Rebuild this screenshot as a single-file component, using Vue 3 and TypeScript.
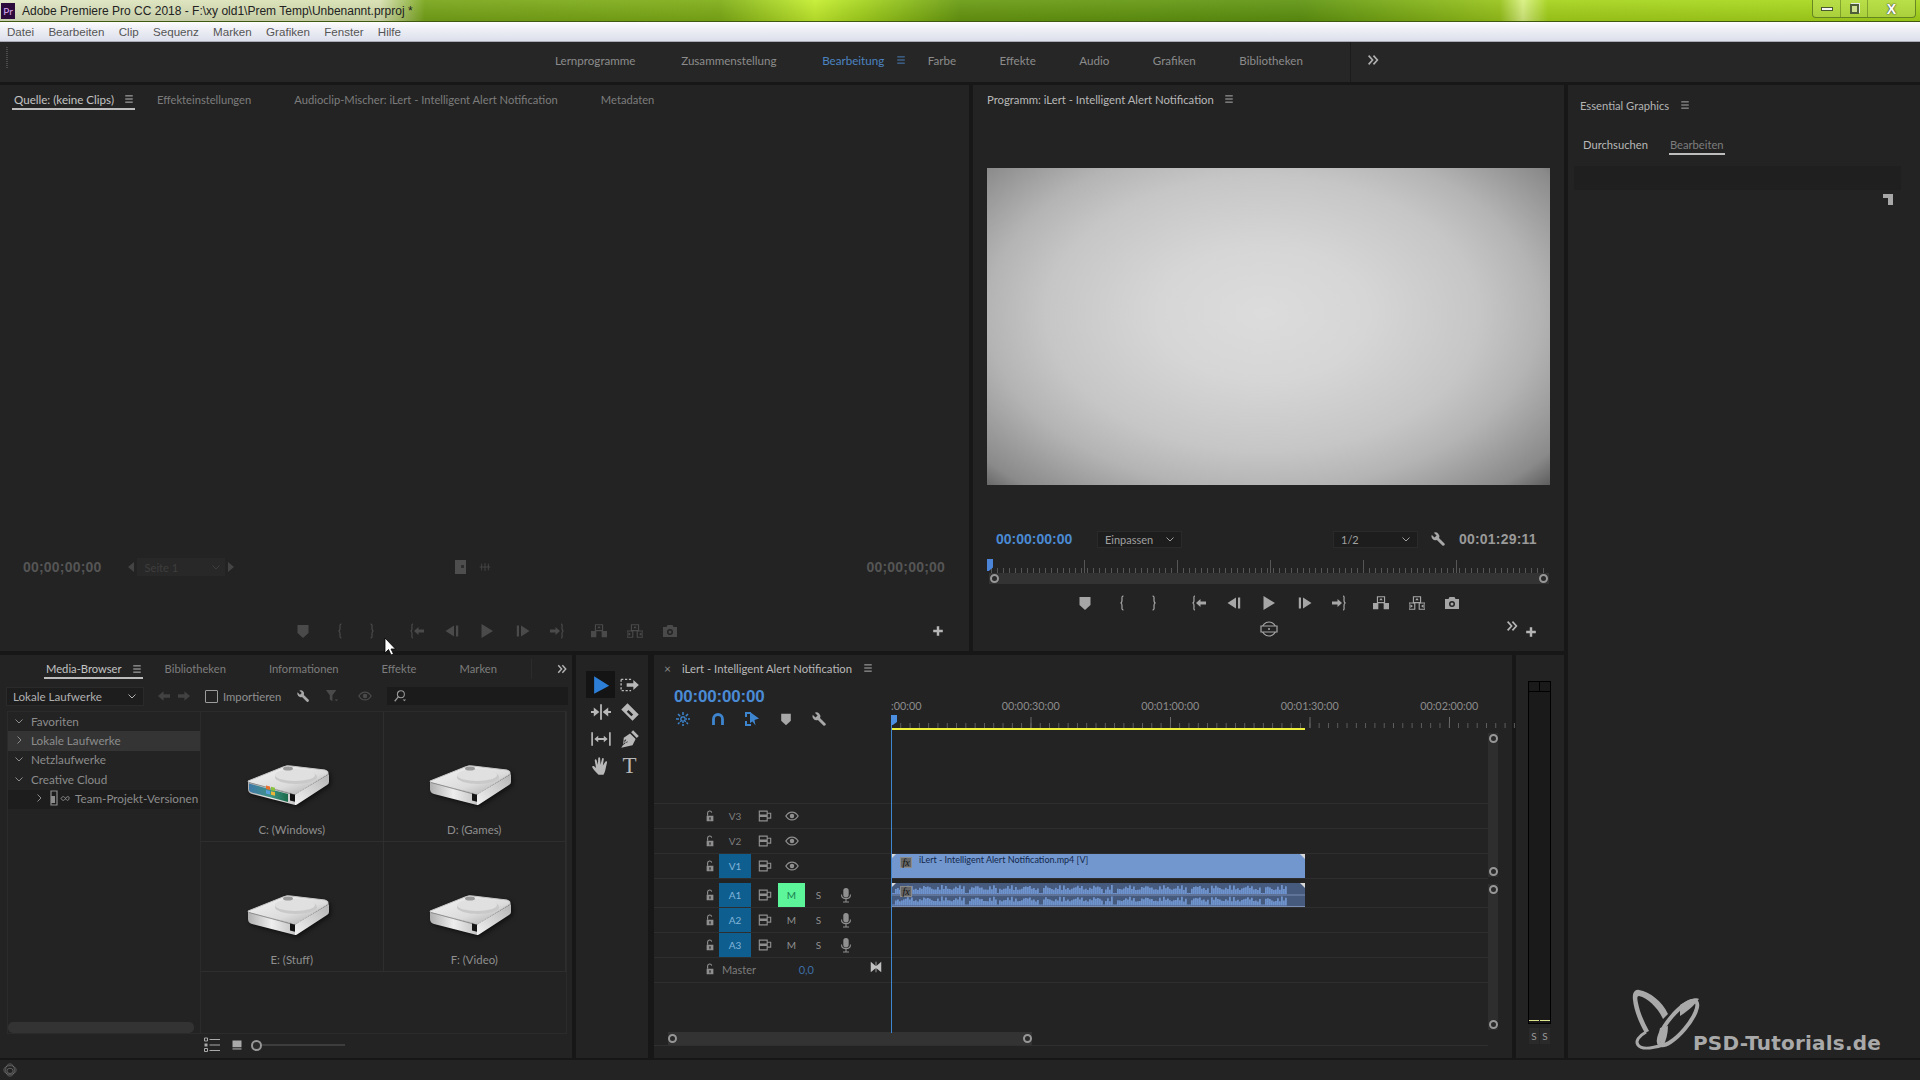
<template>
  <div class="app">
    <!-- shared icon sprite -->
    <svg class="sprite" width="0" height="0" aria-hidden="true">
      <defs>
        <linearGradient id="hdd-top" x1="0" y1="0" x2="1" y2="1">
          <stop offset="0" stop-color="#f4f4f4" />
          <stop offset="0.6" stop-color="#dcdcdc" />
          <stop offset="1" stop-color="#a8a8a8" />
        </linearGradient>
        <linearGradient id="hdd-front" x1="0" y1="0" x2="1" y2="0">
          <stop offset="0" stop-color="#b0b0b0" />
          <stop offset="0.5" stop-color="#eeeeee" />
          <stop offset="1" stop-color="#c4c4c4" />
        </linearGradient>
        <linearGradient id="hdd-side" x1="0" y1="1" x2="1" y2="0">
          <stop offset="0" stop-color="#f2f2f2" />
          <stop offset="1" stop-color="#b4b4b4" />
        </linearGradient>
        <linearGradient id="hdd-win" x1="0" y1="0" x2="1" y2="0">
          <stop offset="0" stop-color="#3f78a8" />
          <stop offset="0.55" stop-color="#3f9488" />
          <stop offset="1" stop-color="#1b6a48" />
        </linearGradient>
      </defs>
      <symbol id="i-menu" viewBox="0 0 16 16"><path d="M2 3h12M2 8h12M2 13h12" stroke="currentColor" stroke-width="1.5" fill="none" /></symbol>
      <symbol id="i-marker" viewBox="0 0 16 16"><path d="M2.500 2h11v8L8 15 2.500 10z" fill="currentColor" /></symbol>
      <symbol id="i-in" viewBox="0 0 16 16"><path d="M9.500 1C7.500 1 8 3 8 5s-.6 3-1.600 3c1 0 1.600 1 1.600 3s-.5 4 1.500 4" stroke="currentColor" stroke-width="1.200" fill="none" /></symbol>
      <symbol id="i-out" viewBox="0 0 16 16"><path d="M6.500 1C8.500 1 8 3 8 5s.6 3 1.600 3C8.600 8 8 9 8 11s.5 4-1.500 4" stroke="currentColor" stroke-width="1.200" fill="none" /></symbol>
      <symbol id="i-goin" viewBox="0 0 16 16"><path d="M4 1C2.400 1 3 3 3 5s-.6 3-1.600 3C2.400 8 3 9 3 11s-.6 4 1 4" stroke="currentColor" stroke-width="1.200" fill="none" /><path d="M5 8l4.500-4v2.500H15v3H9.500V12z" fill="currentColor" /></symbol>
      <symbol id="i-goout" viewBox="0 0 16 16"><path d="M12 1c1.600 0 1 2 1 4s.6 3 1.600 3C13.600 8 13 9 13 11s.6 4-1 4" stroke="currentColor" stroke-width="1.200" fill="none" /><path d="M11 8L6.500 4v2.500H1v3h5.500V12z" fill="currentColor" /></symbol>
      <symbol id="i-stepback" viewBox="0 0 16 16"><path d="M1.500 8L10 2.500v11zM12 2.500h2.200v11H12z" fill="currentColor" /></symbol>
      <symbol id="i-play" viewBox="0 0 16 16"><path d="M2.500 1L14 8 2.500 15z" fill="currentColor" /></symbol>
      <symbol id="i-stepfwd" viewBox="0 0 16 16"><path d="M14.500 8L6 2.500v11zM1.800 2.500H4v11H1.800z" fill="currentColor" /></symbol>
      <symbol id="i-tri-l" viewBox="0 0 8 12"><path d="M7 1v10L1 6z" fill="currentColor" /></symbol>
      <symbol id="i-tri-r" viewBox="0 0 8 12"><path d="M1 1v10l6-5z" fill="currentColor" /></symbol>
      <symbol id="i-lift" viewBox="0 0 18 16"><path d="M0 8h6v7H0zM12 8h6v7h-6z" fill="currentColor" /><path d="M5 1h8v6.500H5z" fill="none" stroke="currentColor" stroke-width="1.300" /><path d="M9 2.500l2 2.500H7z" fill="currentColor" /></symbol>
      <symbol id="i-extract" viewBox="0 0 18 16"><path d="M0 8h6.500v7H0zM11.500 8H18v7h-6.500z" fill="none" stroke="currentColor" stroke-width="1.300" /><path d="M5 1h8v6.500H5z" fill="none" stroke="currentColor" stroke-width="1.300" /><path d="M9 2.500l2 2.500H7zM1.500 9.500l3 2-3 2zM16.500 9.500l-3 2 3 2z" fill="currentColor" /></symbol>
      <symbol id="i-camera" viewBox="0 0 16 16"><path fill-rule="evenodd" d="M1 4h3.500l1-2h5l1 2H15v10H1zM8 6a3 3 0 1 0 0 6 3 3 0 0 0 0-6zm0 1.500a1.500 1.500 0 1 1 0 3 1.500 1.500 0 0 1 0-3z" fill="currentColor" /></symbol>
      <symbol id="i-vr" viewBox="0 0 18 16"><circle cx="9" cy="8" r="7" fill="none" stroke="currentColor" stroke-width="1.200" /><path d="M1 5h16v6H1z" fill="#232323" stroke="currentColor" stroke-width="1.200" /><circle cx="9" cy="8" r="1" fill="currentColor" /></symbol>
      <symbol id="i-wrench" viewBox="0 0 16 16"><path d="M1.700 3.800L4.500 6.600 6.600 4.500 3.800 1.700A4 4 0 0 1 9 6.900L14.500 12.400a1.500 1.500 0 0 1-2.100 2.100L6.900 9A4 4 0 0 1 1.700 3.800z" fill="currentColor" /></symbol>
      <symbol id="i-lock" viewBox="0 0 16 16"><path fill-rule="evenodd" d="M3.500 7.500h9v7.500h-9zM8 9.500a1.200 1.200 0 0 0-.6 2.200V13.500h1.200v-1.800A1.200 1.200 0 0 0 8 9.500z" fill="currentColor" /><path d="M4.800 7.500V4a2.800 2.800 0 0 1 5.500-.6" fill="none" stroke="currentColor" stroke-width="1.500" /></symbol>
      <symbol id="i-sync" viewBox="0 0 16 16"><path d="M1.500 2.500h9v4.500h-9zM1.500 8.500h9v5h-9zM10.500 4.800h4v5.700h-4" fill="none" stroke="currentColor" stroke-width="1.300" /></symbol>
      <symbol id="i-eye" viewBox="0 0 16 16"><path d="M1 8c2-3.400 4.500-4.500 7-4.500S13 4.600 15 8c-2 3.400-4.500 4.500-7 4.500S3 11.400 1 8z" fill="none" stroke="currentColor" stroke-width="1.500" /><circle cx="8" cy="8" r="2.600" fill="currentColor" /></symbol>
      <symbol id="i-mic" viewBox="0 0 16 16"><rect x="5.300" y="1" width="5.400" height="9.500" rx="2.700" fill="currentColor" /><path d="M3.500 7.500c0 5.500 9 5.500 9 0M8 12v2.500M5 15h6" fill="none" stroke="currentColor" stroke-width="1.100" /></symbol>
      <symbol id="i-more" viewBox="0 0 16 16"><path d="M3 3l4.500 5L3 13M8.500 3L13 8l-4.500 5" fill="none" stroke="currentColor" stroke-width="1.900" /></symbol>
      <symbol id="i-plus" viewBox="0 0 16 16"><path d="M8 2.500v11M2.500 8h11" stroke="currentColor" stroke-width="2.800" fill="none" /></symbol>
      <symbol id="i-chev-d" viewBox="0 0 10 10"><path d="M1.500 3.500L5 7l3.500-3.500" stroke="currentColor" stroke-width="1" fill="none" /></symbol>
      <symbol id="i-chev-r" viewBox="0 0 10 10"><path d="M3.500 1.500L7 5 3.500 8.500" stroke="currentColor" stroke-width="1" fill="none" /></symbol>
      <symbol id="i-select" viewBox="0 0 16 16"><path d="M2.500 1L14.500 8.500 2.500 15z" fill="currentColor" /></symbol>
      <symbol id="i-trackselect" viewBox="0 0 18 16"><path d="M1 3h9M1 3v10h9" fill="none" stroke="currentColor" stroke-width="1.200" stroke-dasharray="2 1.500" /><path d="M6 6.500h6V3.500l5 4.500-5 4.500v-3H6z" fill="currentColor" /></symbol>
      <symbol id="i-ripple" viewBox="0 0 18 16"><path d="M9 1v14" stroke="currentColor" stroke-width="1.600" /><path d="M7.500 8L2.500 4v3H0v2h2.500v3zM10.500 8l5-4v3H18v2h-2.500v3z" fill="currentColor" /></symbol>
      <symbol id="i-razor" viewBox="0 0 16 16"><path fill-rule="evenodd" d="M6 1L15 10l-5 5L1 6zM6.800 6.300L5.400 7.700l3.700 3.700 1.400-1.400z" fill="currentColor" /></symbol>
      <symbol id="i-slip" viewBox="0 0 18 16"><path d="M1 2v12M17 2v12" stroke="currentColor" stroke-width="1.500" /><path d="M3 8l3.500-3v2h5V5L15 8l-3.500 3V9h-5v2z" fill="currentColor" /></symbol>
      <symbol id="i-trim" viewBox="0 0 18 16"><path d="M4 3v10M9 2v12M14 3v10M1 8h16" stroke="currentColor" stroke-width="1.200" fill="none" /></symbol>
      <symbol id="i-pen" viewBox="0 0 16 16"><path fill-rule="evenodd" d="M10.500 1L15 5.500l-1.600 1.600-4.500-4.500zM8 3.500L12.500 8 10 13 1 15l4-6.500a1.300 1.300 0 1 0 1 1L2.500 13 3 7z" fill="currentColor" /></symbol>
      <symbol id="i-hand" viewBox="0 0 16 16"><path d="M6 15C4 13 1.500 10.500 1 9c-.3-1 1-1.300 1.700-.6L4 9.500 3 3.500c-.1-1 1.200-1.200 1.500-.2L5.500 7l.3-5.200c0-1 1.400-1 1.500 0L7.600 7l1.200-4.700c.2-1 1.500-.7 1.400.3L9.500 7.500l2-3c.5-.8 1.600-.2 1.300.6L11.500 11c-.4 2-1 3-1.500 4z" fill="currentColor" /></symbol>
      <symbol id="i-nest" viewBox="0 0 16 16"><path d="M8 1v14M1 8h14M3 3l10 10M13 3L3 13" stroke="currentColor" stroke-width="1.500" stroke-dasharray="3 1" fill="none" /><circle cx="8" cy="8" r="1.500" fill="#232323" /></symbol>
      <symbol id="i-magnet" viewBox="0 0 16 16"><path d="M3.500 14V8a4.500 4.500 0 0 1 9 0v6" fill="none" stroke="currentColor" stroke-width="2.800" /></symbol>
      <symbol id="i-link" viewBox="0 0 16 16"><path d="M1 1h6v2H3v3H1zM1 10h2v3h4v2H1z" fill="currentColor" /><path d="M6 1l9 6.500L10.500 9l1 5.500-3-4L6 12z" fill="currentColor" /></symbol>
      <symbol id="i-back" viewBox="0 0 14 12"><path d="M0 6l6-5v3h7v4H6v3z" fill="currentColor" /></symbol>
      <symbol id="i-fwd" viewBox="0 0 14 12"><path d="M14 6L8 1v3H1v4h7v3z" fill="currentColor" /></symbol>
      <symbol id="i-funnel" viewBox="0 0 16 16"><path d="M1 1h12L8.500 7v7l-3-2V7z" fill="currentColor" /><path d="M11 12h4l-2 2z" fill="currentColor" /></symbol>
      <symbol id="i-search" viewBox="0 0 16 16"><circle cx="9" cy="6" r="4" fill="none" stroke="currentColor" stroke-width="1.200" /><path d="M6 9l-4 5" stroke="currentColor" stroke-width="1.400" /><path d="M11 12h4l-2 2z" fill="currentColor" /></symbol>
      <symbol id="i-listview" viewBox="0 0 16 16"><path d="M5.500 2.500H16M5.500 8H16M5.500 13.500H16" stroke="currentColor" stroke-width="1.100" /><path d="M.5 1h3v3h-3zM.5 11.500h3v3h-3z" fill="none" stroke="currentColor" /><path d="M.5 6.500h3v3h-3z" fill="currentColor" /></symbol>
      <symbol id="i-gridview" viewBox="0 0 16 16"><path d="M2 2h12v9H2z" fill="currentColor" /><path d="M2 12.500h12v1.500H2z" fill="currentColor" /></symbol>
      <symbol id="i-team" viewBox="0 0 20 16"><path d="M1 1h6v14H1z" fill="none" stroke="currentColor" stroke-width="1.200" /><path d="M1 6h4v7H1z" fill="currentColor" /><path d="M11 8.500c1.500-2.500 3-2.500 4.500 0s3 2.500 3.500 0-2-2.500-3.500 0-3 2.500-4.500 0z" fill="none" stroke="currentColor" stroke-width="1" /></symbol>
      <symbol id="i-cc" viewBox="0 0 16 16"><ellipse cx="8" cy="8" rx="7" ry="5" fill="none" stroke="currentColor" stroke-width=".8" /><ellipse cx="8" cy="8" rx="5" ry="7" fill="none" stroke="currentColor" stroke-width=".8" /><ellipse cx="8" cy="9" rx="3.500" ry="3" fill="none" stroke="currentColor" stroke-width=".8" /></symbol>
      <symbol id="i-fit" viewBox="0 0 16 16"><path d="M1 1l6.500 5.500V1h1v5.500L15 1v14L8.500 9.500V15h-1V9.500L1 15z" fill="currentColor" /></symbol>
      <symbol id="i-hdd" viewBox="0 0 82 40">
        <path d="M1 16L36 2q4-2 8-1L78 5q4 1 3 4L50 28q-2 1-4 .5L2 18z" fill="url(#hdd-top)" stroke="#c8c8c8" stroke-width="1" stroke-linejoin="round" />
        <ellipse cx="49" cy="12" rx="21" ry="7" fill="#c9c9c9" />
        <ellipse cx="48" cy="10" rx="20" ry="6" fill="#e0e0e0" />
        <ellipse cx="41" cy="3.500" rx="5" ry="2" fill="#9a9a9a" />
        <path d="M1 17L48 29.500v10.500L5 29Q1 28 1 24z" fill="url(#hdd-front)" />
        <path d="M2 17.500L48 30" stroke="#7e7e7e" stroke-width=".8" fill="none" />
        <path d="M48 29.500L82 9v8q0 2-2 3L50 39.500q-1 .5-2 .5z" fill="url(#hdd-side)" />
        <path d="M43 28.500l5 1.300v7l-5-1.300z" fill="#141414" />
      </symbol>
    </svg>

    <!-- title bar -->
    <header class="titlebar">
      <span class="titlebar__badge">Pr</span>
      <span class="titlebar__text">Adobe Premiere Pro CC 2018 - F:\xy old1\Prem Temp\Unbenannt.prproj *</span>
      <div class="winbtns">
        <span class="winbtn winbtn--min"><i></i></span>
        <span class="winbtn winbtn--max"><i></i></span>
        <span class="winbtn winbtn--close">X</span>
      </div>
    </header>

    <nav class="menubar">
      <span v-for="m in menus" :key="m">{{ m }}</span>
    </nav>

    <nav class="workspaces">
      <span class="grip"></span>
      <div class="workspaces__tabs">
        <span class="workspaces__lead">Lernprogramme</span>
        <span class="workspaces__lead">Zusammenstellung</span>
        <span class="workspaces__active">Bearbeitung<svg class="ico10"><use href="#i-menu" /></svg></span>
        <span>Farbe</span>
        <span>Effekte</span>
        <span>Audio</span>
        <span>Grafiken</span>
        <span>Bibliotheken</span>
      </div>
      <span class="workspaces__sep"><svg class="ico14"><use href="#i-more" /></svg></span>
    </nav>

    <main class="main">
      <div class="leftcol">
        <div class="toprow">
          <!-- source monitor -->
          <section class="panel source">
            <div class="tabs">
              <span class="tab tab--on">Quelle: (keine Clips)<svg class="ico10"><use href="#i-menu" /></svg></span>
              <span class="tab">Effekteinstellungen</span>
              <span class="tab">Audioclip-Mischer: iLert - Intelligent Alert Notification</span>
              <span class="tab">Metadaten</span>
            </div>
            <div class="source__status">
              <span class="tc-dim">00;00;00;00</span>
              <div class="pager">
                <svg class="ico8"><use href="#i-tri-l" /></svg>
                <span class="pager__box">Seite 1<svg class="ico10"><use href="#i-chev-d" /></svg></span>
                <svg class="ico8"><use href="#i-tri-r" /></svg>
              </div>
              <div class="source__mid">
                <span class="source__film"></span>
                <svg class="ico12"><use href="#i-trim" /></svg>
              </div>
              <span class="tc-dim">00;00;00;00</span>
            </div>
            <div class="transport-row transport-row--dim source__transport">
              <span></span>
              <div class="transport">
                <svg v-for="t in transport" :key="t.icon" class="ico16" :style="{ marginLeft: t.gap + 'px' }"><use :href="'#i-' + t.icon" /></svg>
              </div>
              <svg class="ico14 plus"><use href="#i-plus" /></svg>
            </div>
            <svg class="cursor" width="12" height="20" viewBox="0 0 12 20"><path d="M1 1v15l3.500-3.500L7 18l2.500-1-2.500-5h4.500z" fill="#fff" stroke="#000" stroke-width=".8" /></svg>
          </section>

          <!-- program monitor -->
          <section class="panel program">
            <div class="tabs tabs--program">
              <span class="tab tab--plain">Programm: iLert - Intelligent Alert Notification<svg class="ico10"><use href="#i-menu" /></svg></span>
            </div>
            <div class="video"></div>
            <div class="program__bar">
              <span class="tc-blue">00:00:00:00</span>
              <span class="dropdown dropdown--fit">Einpassen<svg class="ico10"><use href="#i-chev-d" /></svg></span>
              <span class="dropdown dropdown--res">1/2<svg class="ico10"><use href="#i-chev-d" /></svg></span>
              <svg class="ico16 program__wrench"><use href="#i-wrench" /></svg>
              <span class="tc-gray">00:01:29:11</span>
            </div>
            <div class="miniruler"><span class="miniruler__head"></span></div>
            <div class="zoombar"><span class="knob"></span><span class="knob"></span></div>
            <div class="transport-row program__transport">
              <span></span>
              <div class="transport">
                <svg v-for="t in transport" :key="t.icon" class="ico16" :style="{ marginLeft: t.gap + 'px' }"><use :href="'#i-' + t.icon" /></svg>
              </div>
              <span></span>
            </div>
            <div class="transport-row program__extra">
              <span></span>
              <svg class="ico18"><use href="#i-vr" /></svg>
              <div class="program__add">
                <svg class="ico14 program__more"><use href="#i-more" /></svg>
                <svg class="ico14 plus"><use href="#i-plus" /></svg>
              </div>
            </div>
          </section>
        </div>

        <div class="bottomrow">
          <!-- media browser -->
          <section class="panel media">
            <div class="tabs tabs--media">
              <span class="tab tab--on">Media-Browser<svg class="ico10"><use href="#i-menu" /></svg></span>
              <span class="tab">Bibliotheken</span>
              <span class="tab">Informationen</span>
              <span class="tab">Effekte</span>
              <span class="tab">Marken</span>
              <span class="media__more"><svg class="ico12"><use href="#i-more" /></svg></span>
            </div>
            <div class="media__tools">
              <span class="dropdown dropdown--drives">Lokale Laufwerke<svg class="ico10"><use href="#i-chev-d" /></svg></span>
              <svg class="nav-ico nav-ico--first"><use href="#i-back" /></svg>
              <svg class="nav-ico"><use href="#i-fwd" /></svg>
              <span class="check"></span>
              <span class="media__import">Importieren</span>
              <svg class="ico14 media__wrench"><use href="#i-wrench" /></svg>
              <svg class="ico14 media__dim"><use href="#i-funnel" /></svg>
              <svg class="ico14 media__dim media__eye"><use href="#i-eye" /></svg>
              <span class="searchbox"><svg class="ico14"><use href="#i-search" /></svg></span>
            </div>
            <div class="media__body">
              <div class="tree">
                <div v-for="row in tree" :key="row.label" class="tree__row" :class="row.cls">
                  <svg class="ico10"><use :href="row.open ? '#i-chev-d' : '#i-chev-r'" /></svg>
                  <svg v-if="row.cls === 'tree__row--team'" class="tree__team"><use href="#i-team" /></svg>
                  <span>{{ row.label }}</span>
                </div>
                <div class="tree__scroll"></div>
              </div>
              <div class="drives">
                <div v-for="d in drives" :key="d.name" class="drive">
                  <svg class="drive__icon" viewBox="0 0 82 40">
                    <use href="#i-hdd" />
                    <template v-if="d.system">
                      <path d="M2 18.500L41 29v8L5 27.500Q2 26.500 2 24z" fill="url(#hdd-win)" />
                      <path d="M19 20.500l4 1v3.500l-4-1z" fill="#e8702e" />
                      <path d="M24 21.800l4 1v3.500l-4-1z" fill="#8ac13f" />
                      <path d="M19 25l4 1v3.500l-4-1z" fill="#5aa0e0" />
                      <path d="M24 26.300l4 1v3.500l-4-1z" fill="#e9b63a" />
                    </template>
                  </svg>
                  <span class="drive__name">{{ d.name }}</span>
                </div>
              </div>
            </div>
            <div class="media__foot">
              <svg class="ico16 media__list"><use href="#i-listview" /></svg>
              <svg class="ico12"><use href="#i-gridview" /></svg>
              <span class="knob knob--slider"></span>
              <span class="media__slider"></span>
            </div>
          </section>

          <!-- tool strip -->
          <section class="panel tools">
            <span v-for="tool in tools" :key="tool.icon" class="tool" :class="{ 'tool--on': tool.on }">
              <em v-if="tool.icon === 'type'" class="tool__type">T</em>
              <svg v-else class="ico20"><use :href="'#i-' + tool.icon" /></svg>
            </span>
          </section>

          <!-- timeline -->
          <section class="panel timeline">
            <div class="timeline__tab">
              <span class="timeline__close">×</span>
              <span>iLert - Intelligent Alert Notification</span>
              <svg class="ico10"><use href="#i-menu" /></svg>
            </div>
            <div class="timeline__main">
              <div class="timeline__stage">
                <div class="timeline__top">
                  <div class="timeline__ctl">
                    <span class="tc-big">00:00:00:00</span>
                    <div class="timeline__btns">
                      <svg class="ico16 blue"><use href="#i-nest" /></svg>
                      <svg class="ico16 blue"><use href="#i-magnet" /></svg>
                      <svg class="ico16 blue"><use href="#i-link" /></svg>
                      <svg class="ico14"><use href="#i-marker" /></svg>
                      <svg class="ico16"><use href="#i-wrench" /></svg>
                    </div>
                  </div>
                  <div class="ruler">
                    <div class="ruler__labels">
                      <span v-for="(l, i) in rulerLabels" :key="l" :class="{ 'ruler__first': i === 0 }">{{ l }}</span>
                    </div>
                    <div class="ruler__ticks"></div>
                    <div class="ruler__work"></div>
                  </div>
                </div>

                <div class="tracks">
                  <div v-for="t in tracks" :key="t.name" class="track" :class="t.cls">
                    <div class="track__head">
                      <span></span>
                      <svg class="ico12"><use href="#i-lock" /></svg>
                      <span class="track__target" :class="{ 'track__target--on': t.on }">{{ t.name }}</span>
                      <svg class="ico14"><use href="#i-sync" /></svg>
                      <template v-if="t.kind === 'v'">
                        <svg class="ico14"><use href="#i-eye" /></svg>
                      </template>
                      <template v-else>
                        <span class="track__m" :class="{ 'track__m--on': t.mute }">M</span>
                        <span class="track__s">S</span>
                        <svg class="ico16"><use href="#i-mic" /></svg>
                      </template>
                    </div>
                    <div class="track__lane">
                      <div v-if="t.name === 'V1'" class="clip clip--video">
                        <span class="fx">fx</span>
                        <span class="clip__name">iLert - Intelligent Alert Notification.mp4 [V]</span>
                      </div>
                      <div v-if="t.name === 'A1'" class="clip clip--audio">
                        <svg class="wave" viewBox="0 0 414 24" preserveAspectRatio="none"><path :d="wavePath" fill="#6f94cd" /><path d="M0 12h414M0 23.500h414" stroke="#8fa5c8" stroke-width=".7" /></svg>
                        <span class="fx fx--audio">fx</span>
                      </div>
                    </div>
                  </div>
                  <div class="track track--master">
                    <div class="track__head track__head--master">
                      <span></span>
                      <svg class="ico12"><use href="#i-lock" /></svg>
                      <span class="track__master">Master</span>
                      <span class="track__vol">0,0</span>
                      <svg class="ico12 track__fit"><use href="#i-fit" /></svg>
                    </div>
                    <div class="track__lane"></div>
                  </div>
                </div>

                <div class="playhead"></div>

                <div class="hscroll">
                  <div class="hscroll__thumb"><span class="knob"></span><span class="knob"></span></div>
                </div>
              </div>

              <div class="vscroll">
                <div class="vscroll__bar"><span class="knob"></span><span class="knob"></span></div>
                <div class="vscroll__bar vscroll__bar--low"><span class="knob"></span><span class="knob"></span></div>
              </div>
            </div>
          </section>

          <!-- audio meters -->
          <section class="panel meters">
            <div class="meter">
              <div class="meter__head"></div>
              <div class="meter__body"></div>
              <div class="meter__peak"><i></i><i></i></div>
            </div>
            <div class="meter__solo"><span>S</span><span>S</span></div>
          </section>
        </div>
      </div>

      <!-- essential graphics -->
      <aside class="panel essential">
        <div class="essential__head">Essential Graphics<svg class="ico10"><use href="#i-menu" /></svg></div>
        <div class="essential__tabs">
          <span class="essential__browse">Durchsuchen</span>
          <span class="essential__edit">Bearbeiten</span>
        </div>
        <div class="essential__band"></div>
        <div class="essential__new"><svg width="10" height="11" viewBox="0 0 10 11"><path d="M0 0h10v11H5V4H0z" fill="#a8a8a8" /></svg></div>

        <div class="brand">
          <svg class="brand__mark" viewBox="0 0 84 66">
            <path d="M3 12C2 5 5 1 9 2 20 4 32 13 38 26L33 31C28 20 18 10 9 8 7 8 7 10 8 15 10 25 14 34 19 43L15 45C9 35 4 22 3 12z" fill="#a9a9a9" />
            <ellipse cx="48" cy="35" rx="9" ry="28" transform="rotate(40 48 35)" fill="none" stroke="#a9a9a9" stroke-width="4" />
            <path d="M50 17C58 12 66 9 69 11 64 18 56 24 50 28z" fill="#a9a9a9" />
            <path d="M30 40C28 48 30 56 33 59 36 52 38 46 38 38z" fill="#a9a9a9" />
            <path d="M16 44C9 48 5 53 8 57S20 61 33 57" fill="none" stroke="#a9a9a9" stroke-width="3" />
          </svg>
          <span class="brand__name">PSD-Tutorials.de</span>
        </div>
      </aside>
    </main>

    <footer class="statusbar"><svg class="ico14"><use href="#i-cc" /></svg></footer>
  </div>
</template>

<script setup lang="ts">
import { computed } from 'vue'

interface Track {
  name: string
  kind: 'v' | 'a'
  on?: boolean
  mute?: boolean
  cls?: string
}

const menus = ['Datei', 'Bearbeiten', 'Clip', 'Sequenz', 'Marken', 'Grafiken', 'Fenster', 'Hilfe']

// gap = distance between icon boxes, the row is centred in its panel
const transport = [
  { icon: 'marker', gap: 0 },
  { icon: 'in', gap: 21 },
  { icon: 'out', gap: 16 },
  { icon: 'goin', gap: 29 },
  { icon: 'stepback', gap: 19 },
  { icon: 'play', gap: 19 },
  { icon: 'stepfwd', gap: 20 },
  { icon: 'goout', gap: 18 },
  { icon: 'lift', gap: 26 },
  { icon: 'extract', gap: 20 },
  { icon: 'camera', gap: 19 },
]

const tree = [
  { label: 'Favoriten', open: true, cls: '' },
  { label: 'Lokale Laufwerke', open: false, cls: 'tree__row--on' },
  { label: 'Netzlaufwerke', open: true, cls: '' },
  { label: 'Creative Cloud', open: true, cls: '' },
  { label: 'Team-Projekt-Versionen', open: false, cls: 'tree__row--team' },
]

const drives = [
  { name: 'C: (Windows)', system: true },
  { name: 'D: (Games)', system: false },
  { name: 'E: (Stuff)', system: false },
  { name: 'F: (Video)', system: false },
]

const tools = [
  { icon: 'select', on: true },
  { icon: 'trackselect' },
  { icon: 'ripple' },
  { icon: 'razor' },
  { icon: 'slip' },
  { icon: 'pen' },
  { icon: 'hand' },
  { icon: 'type' },
]

const rulerLabels = [':00:00', '00:00:30:00', '00:01:00:00', '00:01:30:00', '00:02:00:00']

const tracks: Track[] = [
  { name: 'V3', kind: 'v', cls: 'track--first' },
  { name: 'V2', kind: 'v' },
  { name: 'V1', kind: 'v', on: true, cls: 'track--split' },
  { name: 'A1', kind: 'a', on: true, mute: true },
  { name: 'A2', kind: 'a', on: true },
  { name: 'A3', kind: 'a', on: true },
]

// fake stereo waveform, two channels of the same bars, stops a bit before the clip end
const wavePath = computed(() => {
  let d = ''
  for (let i = 0; i < 198; i++) {
    const x = i * 2
    const quiet = i % 37 < 2 || i % 53 === 0
    const n = Math.abs(Math.sin(i * 1.7) * Math.cos(i * 0.37))
    const h = quiet ? 1 : 4 + n * 5
    d += `M${x} ${11 - h}h1.800v${h}h-1.800z`
    d += `M${x} ${22.500 - h}h1.800v${h}h-1.800z`
  }
  return d
})
</script>

<style>
html,
body {
  margin: 0;
  background: #232323;
}
</style>

<style scoped>
.app {
  width: 1920px;
  height: 1080px;
  display: flex;
  flex-direction: column;
  overflow: hidden;
  font-family: Lato, "Liberation Sans", sans-serif;
  font-size: 11.2px;
  color: #8c8c8c;
  background: #232323;
}

.sprite {
  position: absolute;
}

svg {
  display: block;
  flex: none;
}

.ico8 { width: 8px; height: 12px; }
.ico10 { width: 10px; height: 10px; }
.ico12 { width: 12px; height: 12px; }
.ico14 { width: 14px; height: 14px; }
.ico16 { width: 16px; height: 16px; }
.ico18 { width: 18px; height: 18px; }
.ico20 { width: 20px; height: 20px; }

.panel {
  background: #232323;
  position: relative;
}

/* title + menu bars */
.titlebar {
  height: 21px;
  flex: none;
  display: flex;
  align-items: center;
  gap: 7px;
  border-bottom: 1px solid #3f5a10;
  background:
    linear-gradient(180deg, rgba(255, 255, 255, 0.08), rgba(0, 0, 0, 0.1)),
    linear-gradient(90deg, #dfe6c4 0, #d7e0b0 380px, #77a518 425px, #7fae16 720px, #c4ee2e 815px, #a6d51e 860px, #689a10 960px, #5f9410 1300px, #98c41a 1500px, #d8f080 1523px, #a5d31a 1548px, #a8d81c 1920px);
}

.titlebar__badge {
  width: 14px;
  height: 16px;
  margin-left: 1px;
  background: #2c0a3c;
  color: #d8a8f0;
  font-size: 10px;
  line-height: 16px;
  text-align: center;
}

.titlebar__text {
  font-family: "Liberation Sans", sans-serif;
  font-size: 12px;
  color: #222;
}

.winbtns {
  margin-left: auto;
  margin-right: 4px;
  height: 17px;
  align-self: flex-start;
  display: flex;
  border: 1px solid rgba(70, 100, 20, 0.7);
  border-top: 0;
  border-radius: 0 0 4px 4px;
  background: rgba(215, 240, 150, 0.25);
}

.winbtn {
  display: flex;
  align-items: center;
  justify-content: center;
  border-right: 1px solid rgba(70, 100, 20, 0.45);
}

.winbtn--min {
  width: 27px;
}

.winbtn--min i {
  width: 12px;
  height: 4px;
  box-sizing: border-box;
  background: #f4f4f4;
  border: 1px solid #4a5a30;
}

.winbtn--max {
  width: 26px;
}

.winbtn--max i {
  width: 9px;
  height: 10px;
  box-sizing: border-box;
  border: 2px solid #4e5e38;
  box-shadow: 1px -1px 0 #e8e8e8;
  background: #cfe08f;
}

.winbtn--close {
  width: 47px;
  border-right: 0;
  color: #fff;
  font: bold 14px "Liberation Sans", sans-serif;
  text-shadow: 0 0 2px #444, 0 0 1px #444;
}

.menubar {
  height: 20px;
  flex: none;
  display: flex;
  align-items: center;
  gap: 14.300px;
  padding-left: 7px;
  box-sizing: border-box;
  color: #555;
  font-family: "Liberation Sans", sans-serif;
  font-size: 11.600px;
  background: linear-gradient(180deg, #fdfdfe 0, #f1f2f7 30%, #dcdfec 100%);
  border-bottom: 1px solid #a8aab4;
}

.workspaces {
  height: 40px;
  flex: none;
  display: flex;
  align-items: center;
  position: relative;
  background: #262626;
}

.grip {
  width: 2px;
  height: 22px;
  margin-left: 6px;
  margin-top: -8px;
  background: repeating-linear-gradient(180deg, #4a4a4a 0 1px, transparent 1px 2px);
}

.workspaces__tabs {
  display: flex;
  gap: 43.500px;
  margin-left: 547px;
  margin-bottom: 4px;
  font-size: 11.600px;
  white-space: nowrap;
}

.workspaces__lead {
  margin-right: 2.200px;
}

.workspaces__active {
  display: flex;
  align-items: center;
  gap: 12px;
  margin-right: -22px;
  color: #4c83c0;
}

.workspaces__sep {
  height: 40px;
  display: flex;
  align-items: center;
  margin-left: 47px;
  padding-left: 15px;
  padding-bottom: 4px;
  box-sizing: border-box;
  border-left: 1px solid #1c1c1c;
  color: #b0b0b0;
}

.main {
  flex: 1;
  min-height: 0;
  display: flex;
  gap: 4px;
  padding: 3px 0 2px;
  background: #171717;
}

.leftcol {
  width: 1564px;
  flex: none;
  display: flex;
  flex-direction: column;
  gap: 4px;
}

.toprow {
  height: 566px;
  flex: none;
  display: flex;
  gap: 4px;
}

.bottomrow {
  flex: 1;
  min-height: 0;
  display: flex;
  gap: 4px;
}

/* panel tabs */
.tabs {
  height: 28px;
  display: flex;
  align-items: center;
  gap: 43px;
  padding-left: 14px;
  white-space: nowrap;
}

.tab {
  display: flex;
  align-items: center;
  height: 100%;
  gap: 10px;
  position: relative;
  color: #7d7d7d;
}

.tab--on {
  color: #c4c4c4;
  margin-right: -20px;
}

.source .tab--on {
  font-size: 11.600px;
}

.tab--on::after {
  content: "";
  position: absolute;
  left: -2px;
  right: -1px;
  bottom: 3px;
  height: 2px;
  background: #bdbdbd;
}

.tab--plain {
  color: #b8b8b8;
  font-size: 11.300px;
}

.tabs--media {
  height: 27px;
  padding-left: 46px;
}

.media__more {
  margin-left: -9px;
  height: 20px;
  display: flex;
  align-items: center;
  padding-left: 24px;
  border-left: 1px solid #2c2c2c;
  color: #b4b4b4;
}

/* source monitor */
.source {
  width: 969px;
  flex: none;
  display: flex;
  flex-direction: column;
}

.source__status {
  margin-top: auto;
  height: 20px;
  display: flex;
  align-items: center;
  padding: 0 24px 0 23px;
}

.tc-dim {
  font: bold 14px "Liberation Sans", sans-serif;
  color: #555;
  letter-spacing: 0.2px;
}

.pager {
  display: flex;
  align-items: center;
  gap: 2px;
  margin-left: 26px;
  color: #444;
}

.pager__box {
  width: 88px;
  height: 18px;
  display: flex;
  align-items: center;
  justify-content: space-between;
  padding: 0 4px 0 7px;
  box-sizing: border-box;
  background: #282828;
  color: #3e3e3e;
}

.source__mid {
  display: flex;
  align-items: center;
  gap: 13px;
  margin-left: 220px;
  margin-right: auto;
  color: #4a4a4a;
}

.source__film {
  width: 11px;
  height: 14px;
  background:
    linear-gradient(#2e2e2e, #2e2e2e) right 2px top 5px / 3px 3px no-repeat,
    #4e4e4e;
}

.transport-row {
  display: grid;
  grid-template-columns: 1fr auto 1fr;
  align-items: center;
  color: #a6a6a6;
}

.transport-row--dim {
  color: #4a4a4a;
}

.transport {
  display: flex;
  align-items: center;
}

.source__transport {
  margin-top: 46px;
  margin-bottom: 12px;
  padding-left: 3px;
}

.plus {
  color: #b6b6b6;
  justify-self: end;
}

.source__transport .plus {
  margin-right: 24px;
}

.cursor {
  position: absolute;
  left: 384px;
  top: 552px;
}

/* program monitor */
.program {
  flex: 1;
  min-width: 0;
  padding: 0 14px;
  box-sizing: border-box;
}

.tabs--program {
  padding-left: 0;
}

.video {
  width: 563px;
  height: 317px;
  margin-top: 55px;
  background: radial-gradient(ellipse 62% 70% at 49% 46%, #dcdcdc 0, #d6d6d6 30%, #c6c6c6 62%, #b4b4b4 79%, #8a8a8a 103%, #5c5c5c 113%);
}

.program__bar {
  height: 16px;
  margin-top: 46px;
  display: flex;
  align-items: center;
  padding-left: 9px;
}

.tc-blue {
  width: 101px;
  flex: none;
  color: #4a8ad4;
  font: bold 14px "Liberation Sans", sans-serif;
}

.tc-gray {
  color: #9a9a9a;
  font: bold 14px "Liberation Sans", sans-serif;
  letter-spacing: 0.2px;
}

.dropdown {
  height: 17px;
  display: flex;
  align-items: center;
  justify-content: space-between;
  box-sizing: border-box;
  padding: 0 6px 0 7px;
  background: #1d1d1d;
  border: 1px solid #2a2a2a;
  color: #a0a0a0;
  font-size: 11px;
}

.dropdown--fit {
  width: 85px;
}

.dropdown--res {
  width: 85px;
  margin-left: 151px;
}

.program__wrench {
  margin: 0 13px 0 12px;
  color: #a8a8a8;
}

.miniruler {
  height: 14px;
  margin-top: 12px;
  margin-right: 2px;
  position: relative;
  background-image:
    linear-gradient(90deg, #565656 1px, transparent 1px),
    linear-gradient(90deg, #565656 1px, transparent 1px);
  background-size: 6px 5px, 93px 13px;
  background-position: 4px bottom, 4px bottom;
  background-repeat: repeat-x;
}

.miniruler__head {
  position: absolute;
  left: 0;
  top: 0;
  width: 6px;
  height: 12px;
  background: #4c84d8;
  clip-path: polygon(0 0, 100% 0, 100% 70%, 30% 100%, 0 100%);
}

.zoombar {
  height: 11px;
  margin: 0 1px 0 2px;
  padding: 0 1px;
  display: flex;
  align-items: center;
  justify-content: space-between;
  background: #333;
}

.knob {
  display: block;
  width: 9px;
  height: 9px;
  box-sizing: border-box;
  border: 2px solid #979797;
  border-radius: 50%;
  background: #2a2a2a;
}

.program__transport {
  margin-top: 11px;
}

.program__extra {
  margin-top: 8px;
}

.program__add {
  justify-self: end;
  display: flex;
  align-items: flex-end;
  gap: 5px;
  padding-right: 12px;
}

.program__more {
  margin-bottom: 6px;
  color: #b6b6b6;
}

/* media browser */
.media {
  width: 572px;
  flex: none;
  display: flex;
  flex-direction: column;
  padding-left: 7px;
  box-sizing: border-box;
}

.tabs--media {
  margin-left: -7px;
}

.media__tools {
  height: 18px;
  margin-top: 5px;
  margin-bottom: 1px;
  display: flex;
  align-items: center;
  margin-left: -1px;
}

.dropdown--drives {
  width: 138px;
  height: 19px;
  padding-left: 6px;
  color: #b0b0b0;
  font-size: 11.600px;
}

.nav-ico {
  width: 13px;
  height: 12px;
  margin-left: 6px;
  color: #424242;
}

.nav-ico--first {
  margin-left: 14px;
}

.check {
  width: 13px;
  height: 13px;
  margin-left: 15px;
  border: 1.500px solid #9c9c9c;
  border-radius: 1px;
  box-sizing: border-box;
}

.media__import {
  width: 58px;
  margin-left: 5px;
  color: #8f8f8f;
  font-size: 11.300px;
  white-space: nowrap;
}

.media__wrench {
  margin-left: 15px;
  color: #a8a8a8;
}

.media__dim {
  margin-left: 15px;
  color: #4a4a4a;
}

.media__eye {
  margin-left: 19px;
}

.searchbox {
  width: 181px;
  height: 18px;
  margin-left: 15px;
  padding-left: 6px;
  box-sizing: border-box;
  display: flex;
  align-items: center;
  background: #1b1b1b;
  color: #999;
}

.media__body {
  height: 321px;
  margin-top: 5px;
  margin-right: 5px;
  display: flex;
  border: 1px solid #2b2b2b;
}

.tree {
  width: 192px;
  flex: none;
  display: flex;
  flex-direction: column;
  border-right: 1px solid #2b2b2b;
  color: #8c8c8c;
  font-size: 11.700px;
}

.tree__row {
  height: 19.400px;
  display: flex;
  align-items: center;
  gap: 7px;
  padding: 0 0 2px 6px;
  box-sizing: border-box;
  white-space: nowrap;
}

.tree__row--on {
  background: #343434;
}

.tree__row--team {
  padding-left: 26px;
  background: #1d1d1d;
  gap: 8px;
  overflow: hidden;
}

.tree__team {
  width: 20px;
  height: 16px;
  margin-left: -2px;
  margin-right: -3px;
}

.tree__scroll {
  height: 11px;
  margin: auto 6px 0 0;
  border-radius: 5px;
  background: #333;
}

.drives {
  flex: 1;
  display: grid;
  grid-template-columns: 1fr 1fr;
  grid-template-rows: 130px 130px;
}

.drive {
  display: flex;
  flex-direction: column;
  align-items: center;
  padding-top: 53px;
  box-sizing: border-box;
  border-bottom: 1px solid #2e2e2e;
  border-right: 1px solid #2e2e2e;
}

.drive__icon {
  width: 82px;
  height: 40px;
  margin-right: 8px;
  filter: drop-shadow(2px 2px 2px #111);
}

.drive__name {
  margin-top: 18px;
  line-height: 14px;
  color: #8f8f8f;
  font-size: 11.400px;
}

.media__foot {
  flex: 1;
  display: flex;
  align-items: center;
  padding: 0 0 2px 197px;
  color: #aaa;
}

.media__list {
  margin-right: 11px;
}

.knob--slider {
  margin-left: 8px;
  width: 11px;
  height: 11px;
}

.media__slider {
  width: 83px;
  height: 2px;
  background: #3d3d3d;
}

/* tools */
.tools {
  width: 72px;
  flex: none;
  display: grid;
  grid-template-columns: 29px 29px;
  grid-auto-rows: 27px;
  padding: 16px 0 0 10px;
  box-sizing: border-box;
  justify-content: start;
  color: #b8b8b8;
}

.tool {
  display: flex;
  align-items: center;
  justify-content: center;
}

.tool--on {
  background: #141414;
  color: #2d7ed6;
}

.tool__type {
  font: normal 23px "Liberation Serif", serif;
  line-height: 20px;
}

/* timeline */
.timeline {
  flex: 1;
  min-width: 0;
  margin-left: 2px;
  display: flex;
  flex-direction: column;
}

.timeline__tab {
  height: 26px;
  display: flex;
  align-items: center;
  padding-left: 10px;
  gap: 11px;
  color: #b8b8b8;
  font-size: 11.300px;
  flex: none;
}

.timeline__close {
  color: #888;
  font-size: 12px;
}

.timeline__main {
  flex: 1;
  min-height: 0;
  display: flex;
}

.timeline__stage {
  flex: 1;
  min-width: 0;
  display: flex;
  flex-direction: column;
  position: relative;
}

.timeline__top {
  height: 122px;
  flex: none;
  display: grid;
  grid-template-columns: 237px 1fr;
}

.timeline__ctl {
  padding: 6px 0 0 20px;
}

.tc-big {
  display: block;
  color: #4a8ad4;
  font: bold 17px/20px "Liberation Sans", sans-serif;
  letter-spacing: -0.2px;
}

.timeline__btns {
  display: flex;
  align-items: center;
  gap: 18.500px;
  margin-top: 4px;
  margin-left: 1px;
  color: #a8a8a8;
}

.blue {
  color: #3e85cf;
}

.ruler {
  padding-top: 18px;
}

.ruler__labels {
  height: 14px;
  display: flex;
  color: #8c8c8c;
  font-size: 10.800px;
  line-height: 14px;
}

.ruler__labels span {
  width: 139.500px;
  flex: none;
  text-align: center;
}

.ruler__labels .ruler__first {
  width: 70px;
  text-align: left;
}

.ruler__ticks {
  height: 14px;
  margin-top: 1px;
  background-image:
    linear-gradient(90deg, #5f5f5f 1px, transparent 1px),
    linear-gradient(90deg, #6a6a6a 1px, transparent 1px);
  background-size: 9.300px 5px, 139.500px 11px;
  background-position: 0 bottom, 0 bottom;
  background-repeat: repeat-x;
}

.ruler__work {
  width: 414px;
  height: 2px;
  background: #eeee3c;
}

.tracks {
  border-top: 1px solid #2e2e2e;
}

.track {
  height: 25px;
  display: grid;
  grid-template-columns: 237px 1fr;
  box-sizing: border-box;
  border-bottom: 1px solid #2e2e2e;
}

.track--split {
  margin-bottom: 4px;
}

.track__head {
  display: grid;
  grid-template-columns: 46px 19px 32px 27px 27px 27px 27px;
  align-items: center;
  justify-items: center;
  color: #8f8f8f;
}

.track__target {
  justify-self: stretch;
  align-self: stretch;
  display: flex;
  align-items: center;
  justify-content: center;
  font-size: 10px;
  color: #7e7e7e;
}

.track__target--on {
  background: #0e5f90;
  color: #82b4d8;
}

.track__m {
  justify-self: stretch;
  align-self: stretch;
  display: flex;
  align-items: center;
  justify-content: center;
  font-size: 10px;
}

.track__m--on {
  background: #5cf59a;
  color: #1a8050;
}

.track__s {
  font-size: 10px;
}

.track__head--master {
  grid-template-columns: 46px 19px 59px 36px 1fr;
  padding-bottom: 2px;
}

.track__master {
  justify-self: start;
  padding-left: 3px;
  color: #7d7d7d;
  font-size: 11px;
}

.track__vol {
  justify-self: end;
  color: #3e6ea6;
  font-size: 11px;
}

.track__fit {
  justify-self: end;
  margin-right: 9px;
  margin-bottom: 4px;
  color: #c0c0c0;
}

.track__lane {
  position: relative;
  min-width: 0;
}

.clip {
  width: 414px;
  height: 100%;
  position: relative;
}

/* little white trim corners on each clip */
.clip::before,
.clip::after {
  content: "";
  position: absolute;
  top: 0;
  width: 5px;
  height: 5px;
  background: #d8d8d8;
}

.clip::before {
  left: 0;
  clip-path: polygon(0 0, 100% 0, 0 100%);
}

.clip::after {
  right: 0;
  clip-path: polygon(0 0, 100% 0, 100% 100%);
}

.clip--video {
  display: flex;
  align-items: flex-start;
  gap: 7px;
  padding: 3px 0 0 9px;
  box-sizing: border-box;
  background: #7297cf;
  color: #13274a;
  font-size: 9px;
  white-space: nowrap;
}

.clip__name {
  margin-top: -3px;
  line-height: 12px;
}

.clip--audio {
  background: #465a7e;
}

.wave {
  width: 100%;
  height: 100%;
}

.fx {
  width: 12px;
  height: 11px;
  flex: none;
  background: #666;
  border: 1px solid #8a8a8a;
  box-sizing: border-box;
  font: italic 10px/9px "Liberation Serif", serif;
  color: #111;
  text-align: center;
}

.fx--audio {
  position: absolute;
  left: 9px;
  top: 3px;
}

.playhead {
  position: absolute;
  left: 237px;
  top: 34px;
  bottom: 25px;
  width: 1px;
  background: #3f86cf;
}

.playhead::before {
  content: "";
  position: absolute;
  left: 0;
  top: 0;
  width: 6px;
  height: 10px;
  background: #4c8fe0;
  clip-path: polygon(0 0, 100% 0, 100% 70%, 30% 100%, 0 100%);
}

.hscroll {
  margin: auto 0 12px;
  padding: 0 4px 0 14px;
  border-bottom: 1px solid #303030;
}

.hscroll__thumb {
  width: 364px;
  height: 13px;
  display: flex;
  align-items: center;
  justify-content: space-between;
  background: #333;
}

.vscroll {
  width: 24px;
  flex: none;
  padding-top: 52px;
  display: flex;
  flex-direction: column;
  gap: 7px;
  box-sizing: border-box;
}

.vscroll__bar {
  width: 10px;
  height: 144px;
  display: flex;
  flex-direction: column;
  align-items: center;
  justify-content: space-between;
  padding: 1px 0;
  box-sizing: border-box;
  background: #2e2e2e;
}

.vscroll__bar--low {
  height: 146px;
}

/* meters */
.meters {
  width: 48px;
  flex: none;
  padding: 26px 0 0 12px;
  box-sizing: border-box;
}

.meter {
  width: 23px;
  height: 343px;
  display: flex;
  flex-direction: column;
  box-sizing: border-box;
  border: 1px solid #000;
  background: #1a1a1a;
}

.meter__head {
  height: 9px;
  flex: none;
  border-bottom: 1px solid #000;
  background: linear-gradient(90deg, transparent 10px, #000 10px 11px, transparent 11px);
}

.meter__body {
  flex: 1;
}

.meter__peak {
  height: 3px;
  display: flex;
  gap: 1px;
}

.meter__peak i {
  flex: 1;
  height: 1px;
  background: #dfe58c;
}

.meter__solo {
  display: flex;
  gap: 1px;
  margin-top: 4px;
  margin-left: 1px;
}

.meter__solo span {
  width: 10px;
  height: 16px;
  background: #2a2a2a;
  color: #999;
  font-size: 10px;
  line-height: 16px;
  text-align: center;
}

/* essential graphics */
.essential {
  flex: 1;
  min-width: 0;
  padding-left: 12px;
  box-sizing: border-box;
  display: flex;
  flex-direction: column;
}

.essential__head {
  height: 40px;
  display: flex;
  align-items: center;
  gap: 11px;
  color: #b4b4b4;
}

.essential__tabs {
  display: flex;
  gap: 22px;
  margin-top: 9px;
  padding-left: 3px;
  height: 20px;
  align-items: center;
}

.essential__browse {
  color: #b8b8b8;
}

.essential__edit {
  position: relative;
  color: #7d7d7d;
}

.essential__edit::after {
  content: "";
  position: absolute;
  left: -1px;
  right: -1px;
  bottom: -4px;
  height: 2px;
  background: #bdbdbd;
}

.essential__band {
  height: 24px;
  margin: 12px 19px 0 -6px;
  background: #1f1f1f;
}

.essential__new {
  margin: 4px 27px 0 auto;
}

.brand {
  margin-top: auto;
  margin-bottom: 4px;
  margin-left: 50px;
  display: flex;
  align-items: flex-end;
}

.brand__mark {
  width: 84px;
  height: 66px;
  margin-right: -21px;
}

.brand__name {
  font: bold 20px/22px "DejaVu Sans", sans-serif;
  letter-spacing: 0.2px;
  color: #a9a9a9;
  white-space: nowrap;
}

.statusbar {
  height: 20px;
  flex: none;
  display: flex;
  align-items: center;
  padding-left: 3px;
  color: #777;
  background: #232323;
}
</style>
